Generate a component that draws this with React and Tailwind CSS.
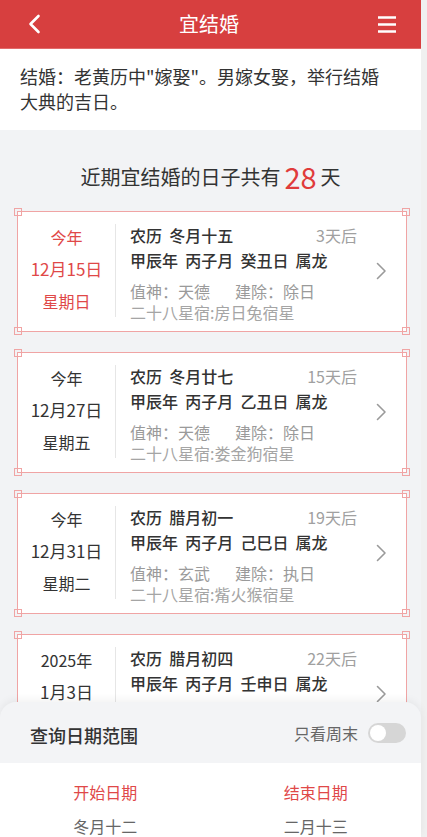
import React from 'react';

const days = [
  { year: '今年', date: '12月15日', week: '星期日', lunar: '农历 冬月十五', after: '3天后', gz: '甲辰年 丙子月 癸丑日 属龙', zs: '天德', jc: '除日', xx: '房日兔宿星', hot: true },
  { year: '今年', date: '12月27日', week: '星期五', lunar: '农历 冬月廿七', after: '15天后', gz: '甲辰年 丙子月 乙丑日 属龙', zs: '天德', jc: '除日', xx: '娄金狗宿星' },
  { year: '今年', date: '12月31日', week: '星期二', lunar: '农历 腊月初一', after: '19天后', gz: '甲辰年 丙子月 己巳日 属龙', zs: '玄武', jc: '执日', xx: '觜火猴宿星' },
  { year: '2025年', date: '1月3日', week: '星期五', lunar: '农历 腊月初四', after: '22天后', gz: '甲辰年 丙子月 壬申日 属龙', zs: '白虎', jc: '破日', xx: '鬼金羊宿星' },
];

function Corner({ pos }) {
  return <span className={`absolute w-[8px] h-[8px] border border-[#f0a4a4] ${pos}`} />;
}

function DayCard({ d }) {
  return (
    <div className="relative ml-[17px] w-[390px] h-[121px] shrink-0 bg-white border border-[#f0a4a4] flex">
      <Corner pos="-top-[4px] -left-[4px]" />
      <Corner pos="-top-[4px] -right-[4px]" />
      <Corner pos="-bottom-[4px] -left-[4px]" />
      <Corner pos="-bottom-[4px] -right-[4px]" />

      <div className={`w-[97px] pt-[9px] flex flex-col items-center text-[16px] leading-[32px] ${d.hot ? 'text-[#e04848]' : 'text-[#333]'}`}>
        <div>{d.year}</div>
        <div className="text-[17px]">{d.date}</div>
        <div>{d.week}</div>
      </div>
      <div className="w-px h-[93px] mt-[12px] bg-[#e6e6e6]" />
      <div className="w-[227px] ml-[14px] pt-[11px] flex flex-col text-[16px]">
        <div className="flex justify-between leading-[24px]">
          <span className="text-[#333] font-medium whitespace-pre">{d.lunar.replace(' ', '  ')}</span>
          <span className="text-[#a0a0a0]">{d.after}</span>
        </div>
        <div className="mt-[1px] leading-[24px] text-[#333] font-medium whitespace-pre">{d.gz.split(' ').join('  ')}</div>
        <div className="mt-[9px] leading-[21px] text-[#9a9a9a] whitespace-nowrap">
          值神：{d.zs}<span className="ml-[25px]">建除：{d.jc}</span>
        </div>
        <div className="leading-[21px] text-[#a5a5a5] whitespace-nowrap">二十八星宿:{d.xx}</div>
      </div>
      <div className="flex-1 flex items-center justify-center pb-[1px]">
        <svg width="11" height="18" viewBox="0 0 11 18" fill="none">
          <path d="M1.5 1.5 L9 9 L1.5 16.5" stroke="#9a9a9a" strokeWidth="1.6" strokeLinecap="round" strokeLinejoin="round" />
        </svg>
      </div>
    </div>
  );
}

export default function App() {
  return (
    <div className="relative w-[427px] h-[837px] overflow-hidden bg-[#f0f0f0] font-['Noto_Sans_CJK_SC','Noto_Sans',sans-serif]">
      <div className="w-[421px] h-full bg-[#f2f3f5] flex flex-col">
        {/* header */}
        <div className="h-[49px] shrink-0 bg-[#d73f3f] border-b border-[#e26a6a] flex items-center justify-between px-[27px] pr-[24px]">
          <svg width="14" height="20" viewBox="0 0 14 20" fill="none">
            <path d="M11.5 2 L3.5 10 L11.5 18" stroke="#fff" strokeWidth="2.6" strokeLinecap="round" strokeLinejoin="round" />
          </svg>
          <span className="text-white text-[20px] leading-[28px]">宜结婚</span>
          <svg width="20" height="18" viewBox="0 0 20 18" fill="none">
            <path d="M1 2.5 H19 M1 9.5 H19 M1 16.5 H19" stroke="#fff" strokeWidth="2.4" />
          </svg>
        </div>

        {/* description */}
        <div className="bg-white pl-[20px] pr-[30px] pt-[15px] pb-[16px] text-[18px] leading-[25px] text-[#333] shrink-0">
          结婚：老黄历中"嫁娶"。男嫁女娶，举行结婚大典的吉日。
        </div>

        {/* count */}
        <div className="pt-[33px] pb-[20px] h-[81px] shrink-0 flex items-end justify-center text-[20px] leading-[28px] text-[#333]">
          <span>近期宜结婚的日子共有</span>
          <span className="text-[#e03b3b] text-[29px] leading-[32px] mx-[4px] -mb-[1px]">28</span>
          <span>天</span>
        </div>

        {/* list */}
        <div className="flex flex-col gap-[20px]">
          {days.map((d, i) => <DayCard key={i} d={d} />)}
        </div>
      </div>

      {/* date range sheet */}
      <div className="absolute left-0 top-[702px] w-[421px] h-[135px] rounded-t-[16px] overflow-hidden bg-[#f3f4f6] shadow-[0_-2px_8px_rgba(0,0,0,0.06)] flex flex-col">
        <div className="h-[61px] shrink-0 flex items-center justify-between pl-[30px] pr-[15px]">
          <span className="text-[18px] text-[#333] font-medium mt-[6px]">查询日期范围</span>
          <div className="flex items-center gap-[10px]">
            <span className="text-[16px] text-[#666]">只看周末</span>
            <div className="w-[38px] h-[20px] rounded-full bg-[#d6d6d6] p-[2px] flex items-center">
              <div className="w-[16px] h-[16px] rounded-full bg-white" />
            </div>
          </div>
        </div>
        <div className="flex-1 bg-white grid grid-cols-2 pt-[14px]">
          <div className="flex flex-col items-center text-[16px] leading-[30px]">
            <span className="text-[#e04848]">开始日期</span>
            <span className="text-[#666] mt-[4px]">冬月十二</span>
          </div>
          <div className="flex flex-col items-center text-[16px] leading-[30px]">
            <span className="text-[#e04848]">结束日期</span>
            <span className="text-[#666] mt-[4px]">二月十三</span>
          </div>
        </div>
      </div>
    </div>
  );
}
